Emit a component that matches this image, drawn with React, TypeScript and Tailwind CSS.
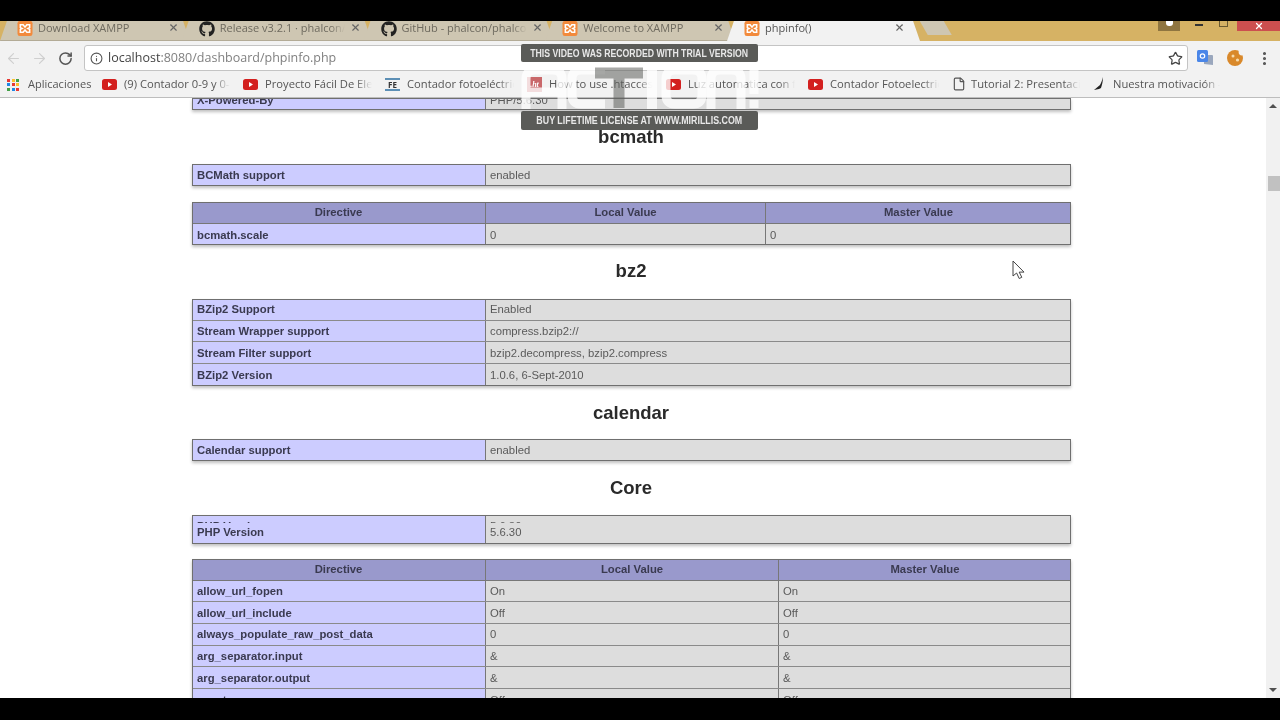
import React from "react";
import { FaGithub } from "react-icons/fa";
import { ArrowLeft, ArrowRight, RotateCw, Info, Star, File, X, MoreVertical } from "lucide-react";

function Xampp() {
  return (
    <svg width="16" height="15" viewBox="0 0 16 16" className="shrink-0">
      <rect width="16" height="16" rx="2.5" fill="#f28a3c" />
      <path d="M3 4h3l2 2.5L10 4h3v3l-2 1 2 1v3h-3L8 9.5 6 12H3V9l2-1-2-1z" fill="none" stroke="#fff" strokeWidth="1.6" />
    </svg>
  );
}
function Yt() {
  return (
    <svg width="15" height="11" viewBox="0 0 15 11" className="shrink-0">
      <rect width="15" height="11" rx="2.5" fill="#d3201f" />
      <path d="M6 3l4 2.5L6 8z" fill="#fff" />
    </svg>
  );
}
function Tab({ w, icon, title, active }: { w: string; icon: React.ReactNode; title: string; active?: boolean }) {
  return (
    <div
      className={`${w} ${active ? "bg-[#f2f2f2] z-10 pr-[15px]" : "bg-[#cec6b2] border-b border-[#b3ab96] pr-[11px]"} h-[20px] -mr-[8.25px] shrink-0 flex items-start pl-[17px] gap-[5px] [clip-path:polygon(0_100%,9px_-6px,calc(100%-9px)_-6px,100%_100%)]`}
    >
      {icon}
      <span className={`flex-1 min-w-0 overflow-hidden whitespace-nowrap text-[11px] leading-[14px] [mask-image:linear-gradient(to_right,black_88%,transparent)] ${active ? "text-[#555]" : "text-[#6e6a5f]"}`}>{title}</span>
      <X size={11} strokeWidth={2.5} className="text-[#666] shrink-0 mt-[1px]" />
    </div>
  );
}
function Bm({ icon, label, w, gap = "gap-[7px]" }: { icon: React.ReactNode; label: string; w: string; gap?: string }) {
  return (
    <div className={`${w} shrink-0 flex items-center ${gap} pr-[13px]`}>
      {icon}
      <span className="flex-1 min-w-0 whitespace-nowrap text-[11.2px] text-[#555] overflow-hidden [mask-image:linear-gradient(to_right,black_85%,transparent)]">{label}</span>
    </div>
  );
}
const cellE = "bg-[#ccccff] text-[#3a3a50] font-semibold pl-[5px] pt-[1px] flex items-center border-r border-[#777] overflow-hidden whitespace-nowrap";
const cellV = "bg-[#dddddd] text-[#5a5a5a] pl-[4px] pt-[1px] flex items-center border-r border-[#777] overflow-hidden whitespace-nowrap";
const tableBox = "w-[879px] outline-1 outline-[#6f6f6f] -outline-offset-1 shadow-[0_2px_3px_rgba(0,0,0,0.25)] text-[11.3px] font-['Liberation_Sans',sans-serif]";
function Table({ cols, head, rows, className }: { cols: string; head?: string[]; rows: string[][]; className?: string }) {
  return (
    <div className={`${tableBox} ${className ?? ""}`}>
      {head && (
        <div className={`grid ${cols} h-[21.67px] bg-[#9999cc] border-b border-[#777]`}>
          {head.map((h) => (
            <div key={h} className="flex items-center justify-center pt-[1px] text-[#3a3a50] font-semibold border-r border-[#777] last:border-r-0">{h}</div>
          ))}
        </div>
      )}
      {rows.map((r, i) => (
        <div key={i} className={`grid ${cols} h-[21.67px] ${i < rows.length - 1 ? "border-b border-[#8a8a8a]" : ""}`}>
          {r.map((c, j) => (
            <div key={j} className={`${j === 0 ? cellE : cellV} last:border-r-0`}>{c}</div>
          ))}
        </div>
      ))}
    </div>
  );
}
function H({ t, className }: { t: string; className: string }) {
  return <h2 className={`w-[1262px] text-center text-[18.5px] leading-[20px] font-bold text-[#2a2a2a] font-['Liberation_Sans',sans-serif] ${className}`}>{t}</h2>;
}
const two = "grid-cols-[294px_1fr]";

export default function App() {
  return (
    <div className="w-[1280px] h-[720px] bg-black overflow-hidden relative font-['Open_Sans',sans-serif] flex flex-col pt-[21px] pb-[22px] blur-[0.35px]">
      {/* tabs */}
      <div className="h-[20px] bg-[#d6b264] flex shrink-0 relative">
        <Tab w="w-[190px]" icon={<Xampp />} title="Download XAMPP" />
        <Tab w="w-[190px]" icon={<FaGithub size={16} className="text-[#222] shrink-0" />} title="Release v3.2.1 · phalcon/" />
        <Tab w="w-[190px]" icon={<FaGithub size={16} className="text-[#222] shrink-0" />} title="GitHub - phalcon/phalcon" />
        <Tab w="w-[190px]" icon={<Xampp />} title="Welcome to XAMPP" />
        <Tab w="w-[193px]" icon={<Xampp />} title="phpinfo()" active />
        <div className="w-[32px] h-[14px] ml-[8px] bg-[#cec6b2] [clip-path:polygon(0_0,75%_0,100%_100%,25%_100%)]" />
        <div className="absolute right-0 top-0 flex items-start h-[10px]">
          <div className="w-[22px] h-[10px] bg-[#8f7540] mr-[15px] flex justify-center"><div className="w-[7px] h-[5px] bg-white rounded-b-[3px]" /></div>
          <div className="w-[8px] h-[2px] bg-[#333] mt-[3px] mr-[16px]" />
          <div className="w-[9px] h-[6px] border-x border-b border-[#6b5a30] mr-[9px]" />
          <div className="w-[43px] h-[10px] bg-[#cc4f4f] flex justify-center"><X size={10} strokeWidth={3} className="text-white" /></div>
        </div>
      </div>
      {/* toolbar */}
      <div className="h-[34px] bg-[#f2f2f2] flex items-center shrink-0 pl-[5px]">
        <ArrowLeft size={17} strokeWidth={1.6} className="text-[#cfcfcf] shrink-0" />
        <ArrowRight size={17} strokeWidth={1.6} className="text-[#cfcfcf] ml-[9px] shrink-0" />
        <RotateCw size={15} strokeWidth={2.4} className="text-[#555] ml-[10px] shrink-0" />
        <div className="ml-[11px] w-[1104px] h-[26px] bg-white border border-[#c4c4c4] rounded-[3px] flex items-center pl-[5px] pr-[4px] shrink-0">
          <Info size={13} className="text-[#555] shrink-0" />
          <span className="ml-[5px] text-[12.5px] text-[#808080]"><span className="text-[#444]">localhost</span>:8080/dashboard/phpinfo.php</span>
          <Star size={15} className="text-[#444] ml-auto" />
        </div>
        <svg width="18" height="18" viewBox="0 0 18 18" className="ml-[8px] shrink-0">
          <path d="M8 6h8a1 1 0 011 1v9l-9-1z" fill="#9aa7bd" />
          <rect x="1" y="1" width="11" height="12" rx="1.5" fill="#4a86e8" />
          <circle cx="6.5" cy="7" r="2.2" fill="none" stroke="#fff" strokeWidth="1.2" />
        </svg>
        <svg width="16" height="16" viewBox="0 0 16 16" className="ml-[13px] shrink-0">
          <circle cx="8" cy="8" r="8" fill="#d9892b" />
          <circle cx="15" cy="2" r="3.4" fill="#f2f2f2" />
          <circle cx="6" cy="6" r="1.5" fill="#f6dcae" />
          <circle cx="10.5" cy="10" r="1.6" fill="#f6dcae" />
        </svg>
        <MoreVertical size={17} strokeWidth={2.4} className="text-[#555] ml-[13px] shrink-0" />
      </div>
      {/* bookmarks */}
      <div className="h-[23px] bg-[#f2f2f2] border-b border-[#bdbdbd] flex items-center shrink-0 pl-[7px] pb-[3px]">
        <div className="grid grid-cols-3 gap-[1.5px] w-[12px] shrink-0">
          {["#e53935","#fbc02d","#43a047","#1e88e5","#e53935","#fbc02d","#43a047","#1e88e5","#e53935"].map((c, i) => (
            <div key={i} className="h-[3px]" style={{ background: c }} />
          ))}
        </div>
        <span className="ml-[9px] text-[11px] text-[#555] w-[74px] shrink-0">Aplicaciones</span>
        <Bm w="w-[141px]" icon={<Yt />} label="(9) Contador 0-9 y 0-99" />
        <Bm w="w-[142px]" icon={<Yt />} label="Proyecto Fácil De Electrónica" />
        <Bm w="w-[142px]" icon={<div className="w-[15px] h-[13px] border-y-2 border-[#5c8fb5] text-[8px] leading-[9px] font-bold text-[#333] text-center shrink-0">FE</div>} label="Contador fotoeléctrico" />
        <Bm w="w-[139px]" icon={<div className="w-[15px] h-[15px] bg-[#c9686a] text-white text-[8px] leading-[15px] italic font-bold text-center font-['Liberation_Serif',serif] shrink-0">.ht</div>} label="How to use .htaccess" />
        <Bm w="w-[142px]" icon={<Yt />} label="Luz automatica con foto" />
        <Bm w="w-[144px]" icon={<Yt />} label="Contador Fotoelectrico" />
        <Bm w="w-[141px]" gap="gap-[5px]" icon={<File size={14} className="text-[#555] shrink-0" />} label="Tutorial 2: Presentación" />
        <Bm w="w-[140px]" gap="gap-[8px]" icon={<svg width="12" height="14" viewBox="0 0 12 14" className="shrink-0"><path d="M10 0C9 4 8 6 7 8L1 13l5-1 2-1c1-3 2-7 2-11z" fill="#222" /></svg>} label="Nuestra motivación –" />
      </div>
      {/* page */}
      <div className="flex-1 min-h-0 flex bg-white">
        <div className="flex-1 min-w-0 overflow-hidden">
          <div className={`${tableBox} ml-[192px] h-[12px] grid grid-cols-[294px_1fr] overflow-hidden`}>
            <div className={`${cellE} items-end leading-[6px] pb-[7px]`}>X-Powered-By</div>
            <div className={`${cellV} items-end leading-[6px] pb-[7px] border-r-0`}>PHP/5.6.30</div>
          </div>
          <H t="bcmath" className="mt-[17px]" />
          <div className="ml-[192px]">
            <Table className="mt-[17px]" cols={two} rows={[["BCMath support", "enabled"]]} />
            <Table className="mt-[16.33px]" cols="grid-cols-[294px_280px_1fr]" head={["Directive", "Local Value", "Master Value"]} rows={[["bcmath.scale", "0", "0"]]} />
          </div>
          <H t="bz2" className="mt-[15.67px]" />
          <div className="ml-[192px]">
            <Table className="mt-[18px]" cols={two} rows={[["BZip2 Support", "Enabled"], ["Stream Wrapper support", "compress.bzip2://"], ["Stream Filter support", "bzip2.decompress, bzip2.compress"], ["BZip2 Version", "1.0.6, 6-Sept-2010"]]} />
          </div>
          <H t="calendar" className="mt-[17.32px]" />
          <div className="ml-[192px]">
            <Table className="mt-[16px]" cols={two} rows={[["Calendar support", "enabled"]]} />
          </div>
          <H t="Core" className="mt-[17.33px]" />
          <div className="ml-[192px]">
            <div className={`${tableBox} mt-[17px] h-[29px] grid grid-cols-[294px_1fr]`}>
              <div className="bg-[#ccccff] border-r border-[#777] pl-[5px] text-[#3a3a50] font-semibold pt-[5px] leading-[12px]">
                <div className="h-[3px] overflow-hidden">PHP Version</div>
                <div className="mt-[2px] leading-[14px]">PHP Version</div>
              </div>
              <div className="bg-[#dddddd] pl-[4px] text-[#5a5a5a] pt-[5px] leading-[12px]">
                <div className="h-[3px] overflow-hidden">5.6.30</div>
                <div className="mt-[2px] leading-[14px]">5.6.30</div>
              </div>
            </div>
            <Table className="mt-[15px]" cols="grid-cols-[294px_293px_1fr]" head={["Directive", "Local Value", "Master Value"]} rows={[["allow_url_fopen", "On", "On"], ["allow_url_include", "Off", "Off"], ["always_populate_raw_post_data", "0", "0"], ["arg_separator.input", "&", "&"], ["arg_separator.output", "&", "&"], ["asp_tags", "Off", "Off"]]} />
          </div>
        </div>
        <div className="w-[14px] shrink-0 bg-[#f1f1f1] flex flex-col items-center justify-between py-[6px] relative">
          <div className="w-0 h-0 border-x-[4px] border-x-transparent border-b-[4px] border-b-[#505050]" />
          <div className="w-0 h-0 border-x-[4px] border-x-transparent border-t-[4px] border-t-[#505050]" />
          <div className="absolute top-[78px] right-0 w-[12px] h-[15px] bg-[#c1c1c1]" />
        </div>
      </div>
      {/* cursor */}
      <svg width="14" height="20" viewBox="0 0 14 20" className="absolute left-[1012px] top-[260px]">
        <path d="M1 1v15l3.6-3 2.6 5.5 2.6-1.2-2.6-5.2H12z" fill="#fff" stroke="#444" strokeWidth="1" />
      </svg>
      {/* watermark */}
      <div className="absolute left-[521px] top-[44px] w-[237px] h-[86px] flex flex-col justify-between">
        <div className="h-[18px] bg-[#5a5b58] rounded-[2px] flex items-center justify-center text-[#e8e8e8] text-[10px] font-bold font-['Liberation_Sans',sans-serif] whitespace-nowrap"><span className="inline-block scale-x-[0.87]">THIS VIDEO WAS RECORDED WITH TRIAL VERSION</span></div>
        <div className="h-[19px] bg-[#5a5b58] rounded-[2px] flex items-center justify-center text-[#e8e8e8] text-[10px] font-bold font-['Liberation_Sans',sans-serif] whitespace-nowrap"><span className="inline-block scale-x-[0.885]">BUY LIFETIME LICENSE AT WWW.MIRILLIS.COM</span></div>
      </div>
      <svg width="238" height="44" viewBox="0 0 238 44" className="absolute left-[521px] top-[65px]" fill="none" strokeWidth="9">
        <g stroke="#fff" opacity="0.78">
          <path d="M5 44V14Q5 5 14 5H32Q41 5 41 14V44M5 27H41" />
          <path d="M84 5H60Q51 5 51 14V30Q51 39 60 39H84" />
          <path d="M131 2V44" strokeWidth="10" />
          <path d="M145 14Q145 5 154 5H172Q181 5 181 14V30Q181 39 172 39H154Q145 39 145 30Z" />
          <path d="M190 44V14Q190 5 199 5H211Q220 5 220 14V44" />
          <path d="M233 1V29M233 35V43" />
        </g>
        <path d="M74 8H122M98 8V43" stroke="#5f605d" strokeWidth="11" opacity="0.55" />
      </svg>
    </div>
  );
}
